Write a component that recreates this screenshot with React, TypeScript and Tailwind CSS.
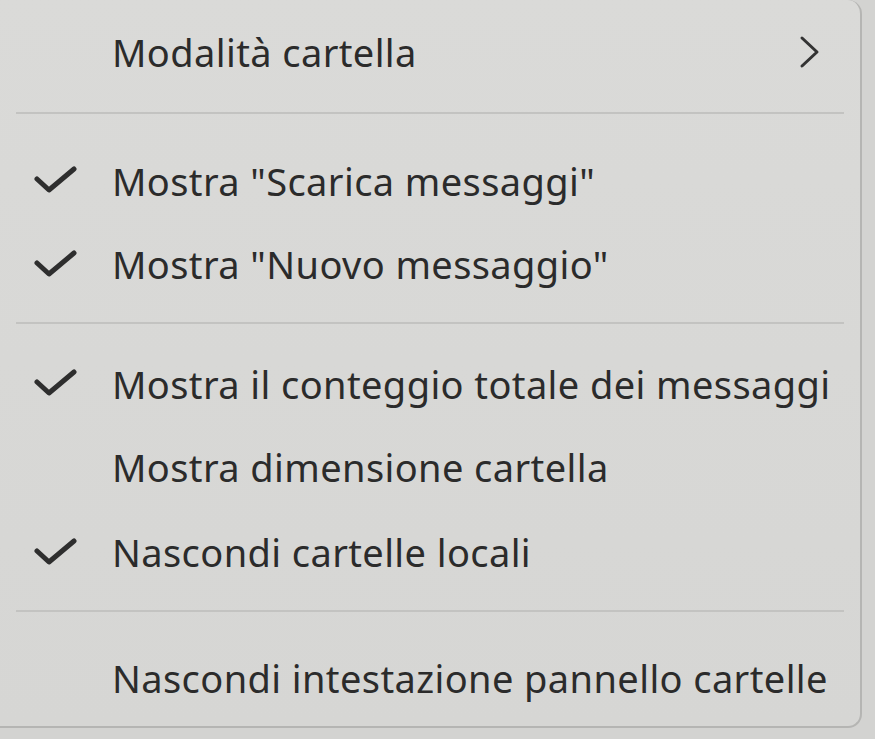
import { ReactNode } from 'react';

interface MenuRowProps {
  label: string;
  checked?: boolean;
  submenu?: boolean;
  className: string;
}

function Check() {
  return (
    <svg width="44" height="30" viewBox="0 0 44 30" className="shrink-0">
      <path d="M3 13 L15 24 L40 3" fill="none" stroke="#2e2e2e" strokeWidth="5" strokeLinecap="round" strokeLinejoin="round" />
    </svg>
  );
}

function Chevron() {
  return (
    <svg width="22" height="34" viewBox="0 0 22 34" className="shrink-0">
      <path d="M4 3 L19 17 L4 31" fill="none" stroke="#333" strokeWidth="3" strokeLinecap="round" strokeLinejoin="round" />
    </svg>
  );
}

function MenuRow({ label, checked, submenu, className }: MenuRowProps) {
  return (
    <div className={`flex items-center ${className}`}>
      <div className="w-[112px] pl-[34px] flex items-center">{checked && <Check />}</div>
      <span className="flex-1 whitespace-nowrap">{label}</span>
      {submenu && <div className="pr-[40px]"><Chevron /></div>}
    </div>
  );
}

function Separator({ className }: { className: string }): ReactNode {
  return (
    <div className={`pl-[16px] pr-[16px] ${className}`}>
      <div className="h-[2px] bg-[#c3c3c1]" />
    </div>
  );
}

export default function App() {
  return (
    <div className="w-[875px] h-[739px] overflow-hidden bg-[#d3d3d1] relative" style={{ fontFamily: '"Noto Sans", sans-serif' }}>
      <div className="w-[862px] h-[728px] bg-gradient-to-b from-[#dadad8] to-[#d6d6d4] border-r-2 border-b-2 border-[#b5b5b3] rounded-br-[14px] rounded-tr-[14px] text-[38px] text-[#2b2b2b] tracking-[0.4px]">
        <MenuRow label="Modalità cartella" submenu className="h-[104px]" />
        <Separator className="pt-[8px] pb-[25px]" />
        <MenuRow label={'Mostra "Scarica messaggi"'} checked className="h-[84px]" />
        <MenuRow label={'Mostra "Nuovo messaggio"'} checked className="h-[83px]" />
        <Separator className="pt-[16px] pb-[18px]" />
        <MenuRow label="Mostra il conteggio totale dei messaggi" checked className="h-[84px]" />
        <MenuRow label="Mostra dimensione cartella" className="h-[83px]" />
        <MenuRow label="Nascondi cartelle locali" checked className="h-[87px]" />
        <Separator className="pt-[14px] pb-[24px]" />
        <MenuRow label="Nascondi intestazione pannello cartelle" className="h-[84px]" />
      </div>
    </div>
  );
}
